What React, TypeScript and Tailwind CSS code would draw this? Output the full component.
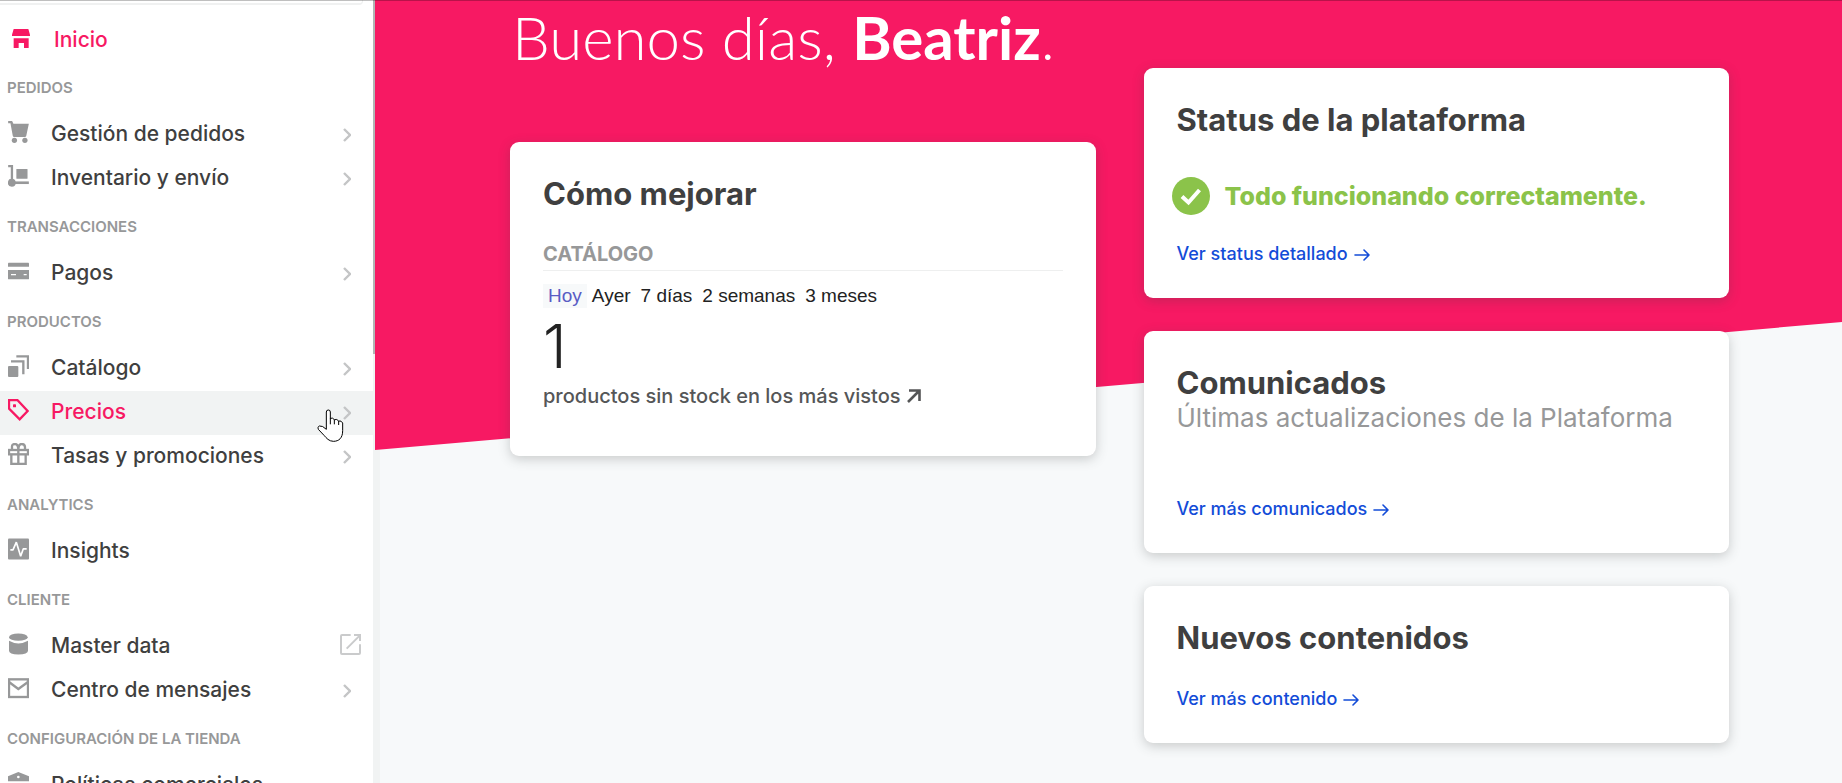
import type { ReactNode } from "react";

type Trailing = "chevron" | "external" | "none";

type NavItem = {
  label: string;
  icon: ReactNode;
  trailing: Trailing;
  active?: boolean;
};

type NavSection = {
  title: string;
  items: NavItem[];
};

function Glyph({ box, children }: { box: string; children: ReactNode }) {
  return (
    <svg viewBox={box} className="h-[22px] w-[21px]" fill="currentColor" aria-hidden="true">
      {children}
    </svg>
  );
}

const StoreIcon = () => (
  <svg viewBox="0 0 54 57" className="h-[19px] w-[18px]" fill="currentColor" aria-hidden="true">
    <path d="M5 0H49L54 17V21H0V17Z" />
    <path d="M5 28H50V57H36V42H20V57H5Z" />
  </svg>
);

const CartIcon = () => (
  <Glyph box="0 0 63 67">
    <path d="M0 0H12L16 8H63L55 46Q54 49 51 49H18Q15 49 14 45L7 7H0Z" />
    <circle cx="19" cy="59" r="8" />
    <circle cx="51" cy="59" r="8" />
  </Glyph>
);

const DollyIcon = () => (
  <Glyph box="0 0 63 67">
    <path d="M0 0H15V46H8V7H0Z" />
    <rect x="25" y="12" width="34" height="30" rx="2" />
    <rect x="16" y="50" width="47" height="8" />
    <circle cx="11" cy="54" r="12" />
  </Glyph>
);

const CardIcon = () => (
  <Glyph box="0 -8 63 66">
    <path d="M2 0H61Q63 0 63 2V12H0V2Q0 0 2 0Z" />
    <path
      fillRule="evenodd"
      d="M0 22H63V48Q63 50 61 50H2Q0 50 0 48ZM9 34V38H24V34ZM47 34V38H56V34Z"
    />
  </Glyph>
);

const LayersIcon = () => (
  <Glyph box="0 0 63 66">
    <rect x="0" y="33" width="31" height="33" rx="3" />
    <path d="M9 19H46V58M25 4H60V42" fill="none" stroke="currentColor" strokeWidth="7" />
  </Glyph>
);

const TagIcon = () => (
  <Glyph box="0 0 63 66">
    <path d="M3 3H28L59 36L35 61L3 29Z" fill="none" stroke="currentColor" strokeWidth="7" />
    <rect x="15" y="16" width="9" height="9" rx="2" />
  </Glyph>
);

const GiftIcon = () => (
  <Glyph box="0 0 63 66">
    <g fill="none" stroke="currentColor" strokeWidth="7">
      <rect x="3" y="21" width="57" height="13" />
      <path d="M10 35V63H53V35M31 23V63" />
      <path d="M31 21Q31 3 21 3T12 13V21M31 21Q31 3 41 3T51 13V21" />
    </g>
  </Glyph>
);

const PulseIcon = () => (
  <Glyph box="0 -1 63 65">
    <rect width="63" height="63" rx="3" />
    <path
      d="M7 34H15L25 11L38 53L46 31H56"
      fill="none"
      stroke="white"
      strokeWidth="5"
      strokeLinejoin="bevel"
    />
  </Glyph>
);

const DatabaseIcon = () => (
  <Glyph box="0 -1 63 65">
    <ellipse cx="31" cy="11" rx="28" ry="11" />
    <path d="M3 22Q31 38 60 22V52Q60 63 31 63Q3 63 3 52Z" />
  </Glyph>
);

const MailIcon = () => (
  <Glyph box="0 -4 63 66">
    <g fill="none" stroke="currentColor" strokeWidth="7">
      <rect x="3" y="3" width="57" height="53" />
      <path d="M3 11L31 32L60 11" />
    </g>
  </Glyph>
);

const PolicyIcon = () => (
  <Glyph box="0 0 63 66">
    <path fillRule="evenodd" d="M0 13L31 0L63 13V28H0ZM31 11A4 4 0 1 0 31 19A4 4 0 1 0 31 11Z" />
    <path d="M6 33H16V53H6ZM26 33H37V53H26ZM47 33H57V53H47ZM0 57H63V66H0Z" />
  </Glyph>
);

const sections: NavSection[] = [
  {
    title: "PEDIDOS",
    items: [
      { label: "Gestión de pedidos", icon: <CartIcon />, trailing: "chevron" },
      { label: "Inventario y envío", icon: <DollyIcon />, trailing: "chevron" },
    ],
  },
  {
    title: "TRANSACCIONES",
    items: [{ label: "Pagos", icon: <CardIcon />, trailing: "chevron" }],
  },
  {
    title: "PRODUCTOS",
    items: [
      { label: "Catálogo", icon: <LayersIcon />, trailing: "chevron" },
      { label: "Precios", icon: <TagIcon />, trailing: "chevron", active: true },
      { label: "Tasas y promociones", icon: <GiftIcon />, trailing: "chevron" },
    ],
  },
  {
    title: "ANALYTICS",
    items: [{ label: "Insights", icon: <PulseIcon />, trailing: "none" }],
  },
  {
    title: "CLIENTE",
    items: [
      { label: "Master data", icon: <DatabaseIcon />, trailing: "external" },
      { label: "Centro de mensajes", icon: <MailIcon />, trailing: "chevron" },
    ],
  },
  {
    title: "CONFIGURACIÓN DE LA TIENDA",
    items: [{ label: "Políticas comerciales", icon: <PolicyIcon />, trailing: "none" }],
  },
];

function TrailingIcon({ kind }: { kind: Trailing }) {
  if (kind === "none") return null;
  if (kind === "external") {
    return (
      <svg
        viewBox="0 0 63 63"
        className="mr-3 mb-1 size-[21px] text-[#cacbcc]"
        fill="none"
        stroke="currentColor"
        strokeWidth="6"
        aria-hidden="true"
      >
        <path d="M32 3H6Q3 3 3 6V57Q3 60 6 60H57Q60 60 60 57V31M20 44L59 5M42 3H60V21" />
      </svg>
    );
  }
  return (
    <svg
      viewBox="0 0 8 14"
      className="mt-0.5 mr-[22px] h-[14px] w-2 text-[#c4c5c6]"
      fill="none"
      stroke="currentColor"
      strokeWidth="2.4"
      aria-hidden="true"
    >
      <path d="M1 1L7 7L1 13" />
    </svg>
  );
}

function HandCursor() {
  return (
    <svg
      viewBox="52 85 81 99"
      className="absolute top-[18px] right-[29px] h-[33px] w-[27px]"
      fill="white"
      stroke="black"
      strokeWidth="3"
      strokeLinejoin="round"
      aria-hidden="true"
    >
      <path d="M80 146V94A6 6 0 0 1 92 94V113Q99 110 104 117Q112 114 117 121Q125 119 129 127V150C129 172 118 182 101 182C88 182 80 172 74 165L56 146Q52 139 59 136Q68 134 80 146Z" />
      <path d="M92 112V131M104 117V131M117 121V133" fill="none" />
    </svg>
  );
}

function Sidebar() {
  return (
    <aside className="flex w-[373px] shrink-0 flex-col bg-white">
      <div className="mr-[10px] h-[5px] shrink-0 rounded-br border-r border-b-2 border-[#f0f1f1]" />
      <nav className="flex flex-col">
        <a href="#inicio" className="flex h-[57px] items-center pt-3.5 pl-3 text-[#f71963]">
          <span className="mb-1 w-[42px]">
            <StoreIcon />
          </span>
          <span className="pb-0.5 text-[21px] leading-7 font-medium">Inicio</span>
        </a>
        {sections.map((section) => (
          <section key={section.title}>
            <h2 className="flex h-[51px] items-center px-[7px] pt-0.5 text-[15px] font-semibold text-[#979899]">
              {section.title}
            </h2>
            <ul>
              {section.items.map((item) => (
                <li key={item.label} className={item.active ? "relative bg-[#f1f3f3]" : ""}>
                  <a href="#seccion" className="flex h-11 items-center pb-0.5 pl-2">
                    <span className={item.active ? "mb-1 w-[43px] text-[#f71963]" : "mb-1 w-[43px] text-[#979899]"}>
                      {item.icon}
                    </span>
                    <span
                      className={
                        item.active
                          ? "flex-1 text-[21px] leading-7 font-medium text-[#f71963]"
                          : "flex-1 text-[21px] leading-7 font-medium text-[#3f3f40]"
                      }
                    >
                      {item.label}
                    </span>
                    <TrailingIcon kind={item.trailing} />
                  </a>
                  {item.active && <HandCursor />}
                </li>
              ))}
            </ul>
          </section>
        ))}
      </nav>
    </aside>
  );
}

function Card({ title, children }: { title: string; children: ReactNode }) {
  return (
    <section className="rounded-[9px] bg-white px-[33px] pt-[34px] shadow-[0_3px_12px_rgba(61,62,64,0.25)]">
      <h2 className="text-[31px] leading-9 font-bold text-[#3f3f40]">{title}</h2>
      {children}
    </section>
  );
}

function CardLink({ children }: { children: ReactNode }) {
  return (
    <a href="#detalle" className="flex items-center gap-1.5 text-[18px] leading-7 font-medium text-[#134cd8]">
      {children}
      <svg
        viewBox="0 0 16 12"
        className="mt-0.5 h-3 w-4"
        fill="none"
        stroke="currentColor"
        strokeWidth="1.6"
        strokeLinecap="round"
        strokeLinejoin="round"
        aria-hidden="true"
      >
        <path d="M1 6H15M10 1L15 6L10 11" />
      </svg>
    </a>
  );
}

const ranges = ["Hoy", "Ayer", "7 días", "2 semanas", "3 meses"];

function ImproveCard() {
  return (
    <Card title="Cómo mejorar">
      <h3 className="mt-7 border-b border-[#eeefef] pb-0.5 text-[20px] leading-7 font-bold text-[#979899]">
        CATÁLOGO
      </h3>
      <div className="mt-[13px] flex font-['Liberation_Sans',sans-serif] text-[19px] leading-6 text-[#222]">
        {ranges.map((range, i) => (
          <button
            key={range}
            type="button"
            className={i === 0 ? "bg-[#f7f9fa] px-[5px] text-[#5a5cc4]" : "px-[5px]"}
          >
            {range}
          </button>
        ))}
      </div>
      <p className="mt-2 text-[60px] leading-[60px] font-light text-[#222]">1</p>
      <a
        href="#sin-stock"
        className="mt-1.5 mb-[46px] flex items-center gap-1.5 text-[20px] leading-7 font-medium text-[#555657]"
      >
        productos sin stock en los más vistos
        <svg
          viewBox="0 0 14 14"
          className="size-3.5"
          fill="none"
          stroke="currentColor"
          strokeWidth="2.6"
          aria-hidden="true"
        >
          <path d="M1 13L12 2M2 1.5H12.5V12" />
        </svg>
      </a>
    </Card>
  );
}

function StatusCard() {
  return (
    <Card title="Status de la plataforma">
      <p className="mt-[39px] mb-[25px] -ml-[5px] flex items-center gap-[15px] text-[25px] leading-[38px] font-extrabold text-[#8bc34a]">
        <svg viewBox="0 0 38 38" className="size-[38px] shrink-0" aria-hidden="true">
          <circle cx="19" cy="19" r="19" fill="currentColor" />
          <path d="M10 19.5L16.5 25.5L27.5 13" fill="none" stroke="white" strokeWidth="4" />
        </svg>
        Todo funcionando correctamente.
      </p>
      <div className="pb-[30px]">
        <CardLink>Ver status detallado</CardLink>
      </div>
    </Card>
  );
}

export default function App() {
  return (
    <div className="relative flex h-screen overflow-hidden font-[Inter,sans-serif]">
      <Sidebar />
      <div className="w-0.5 shrink-0 bg-[#f1f3f3]">
        <div className="h-[354px] bg-[#b3b4b5]" />
      </div>
      <main className="relative flex-1 bg-[#f7f9fa] shadow-[inset_5px_0_0_#f1f3f3]">
        <div className="absolute inset-x-0 top-0 h-[451px] bg-[#f71963] [clip-path:polygon(0_0,100%_0,100%_322px,0_450px)]" />
        <div className="relative grid grid-cols-2 items-start gap-12 pr-[113px] pl-[135px]">
          <div className="flex flex-col">
            <h1 className="mb-[68px] pl-0.5 font-[Lato,sans-serif] text-[60px] leading-[74px] font-light whitespace-nowrap text-white">
              Buenos días, <strong className="font-bold">Beatriz</strong>.
            </h1>
            <ImproveCard />
          </div>
          <div className="flex flex-col gap-[33px] pt-[68px]">
            <StatusCard />
            <Card title="Comunicados">
              <p className="mb-[60px] text-[26px] leading-[34px] text-[#979899]">
                Últimas actualizaciones de la Plataforma
              </p>
              <div className="pb-[30px]">
                <CardLink>Ver más comunicados</CardLink>
              </div>
            </Card>
            <Card title="Nuevos contenidos">
              <div className="pt-[29px] pb-[30px]">
                <CardLink>Ver más contenido</CardLink>
              </div>
            </Card>
          </div>
        </div>
      </main>
      <div className="absolute inset-x-0 top-0 h-px bg-black/25" />
    </div>
  );
}
